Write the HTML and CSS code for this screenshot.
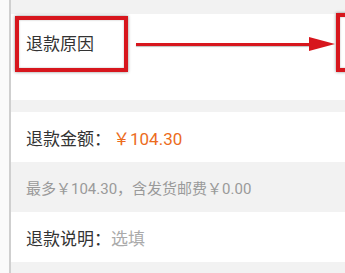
FILE: index.html
```html
<!DOCTYPE html>
<html lang="zh-CN">
<head>
    <meta charset="UTF-8">
    <meta name="viewport" content="width=device-width, initial-scale=1.0">
    <title>退款申请</title>
    <link rel="stylesheet" href="styles.css">
</head>
<body>
    <div class="page">
        <div class="side"></div>
        <div class="main">
            <!-- 退款原因 + 标注 -->
            <div class="card reason">
                <div class="mark mark-left">退款原因</div>
                <div class="arrow">
                    <div class="arrow-line"></div>
                    <div class="arrow-head"></div>
                </div>
                <div class="mark mark-right"></div>
            </div>

            <div class="card row">
                <span class="label">退款金额：</span>
                <span class="amount">￥104.30</span>
            </div>
            <div class="note">最多￥104.30，含发货邮费￥0.00</div>

            <div class="card row">
                <span class="label">退款说明：</span>
                <span class="hint">选填</span>
            </div>
        </div>
    </div>
</body>
</html>
```

FILE: styles.css
```css
body {
    margin: 0;
    font-family: Roboto, "Noto Sans CJK SC", sans-serif;
    color: #333;
    background: #f2f2f2;
}
.page {
    display: flex;
    height: 273px;
    overflow: hidden;
}
.side {
    width: 9px;
    flex-shrink: 0;
    background: #fafafa;
    border-right: 2px solid #cfcfcf;
}
.main {
    flex: 1;
    padding-top: 14px;
    min-width: 0;
}
.card {
    background: #fff;
}
.reason {
    height: 86px;
    margin-bottom: 12px;
    display: flex;
    align-items: flex-start;
    padding-top: 2px;
    box-sizing: border-box;
}
.mark {
    border: 4px solid #d7161d;
    box-shadow: 0 0 3px rgba(0, 0, 0, 0.45), inset 0 0 2px rgba(0, 0, 0, 0.3);
    box-sizing: border-box;
    flex-shrink: 0;
}
.mark-left {
    margin-left: 4px;
    width: 113px;
    height: 56px;
    padding-left: 7px;
    font-size: 17px;
    line-height: 48px;
}
.mark-right {
    width: 40px;
    height: 59px;
    margin-top: -3px;
    margin-left: 1px;
    margin-right: -31px;
}
.arrow {
    flex: 1;
    display: flex;
    align-items: center;
    height: 56px;
    margin-left: 8px;
}
.arrow-line {
    flex: 1;
    height: 3px;
    background: #d7161d;
    box-shadow: 0 1px 1px rgba(0, 0, 0, 0.25);
}
.arrow-head {
    width: 0;
    height: 0;
    border-top: 7px solid transparent;
    border-bottom: 7px solid transparent;
    border-left: 26px solid #d7161d;
    margin-left: -2px;
}
.row {
    height: 50px;
    display: flex;
    align-items: center;
    padding-left: 15px;
    font-size: 17px;
}
.label {
    color: #333;
}
.amount {
    color: #ec6c1c;
    margin-left: 2px;
}
.hint {
    color: #aaa;
}
.note {
    height: 50px;
    display: flex;
    align-items: center;
    padding-left: 15px;
    font-size: 15px;
    color: #9a9a9a;
}
```
